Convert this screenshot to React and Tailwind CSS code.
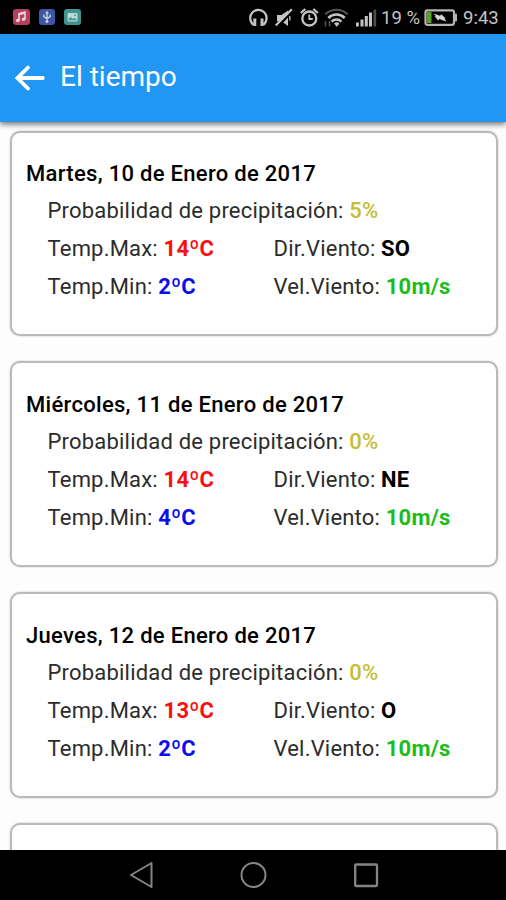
const days = [
  { date: 'Martes, 10 de Enero de 2017', rain: '5%', max: '14ºC', min: '2ºC', dir: 'SO', vel: '10m/s' },
  { date: 'Miércoles, 11 de Enero de 2017', rain: '0%', max: '14ºC', min: '4ºC', dir: 'NE', vel: '10m/s' },
  { date: 'Jueves, 12 de Enero de 2017', rain: '0%', max: '13ºC', min: '2ºC', dir: 'O', vel: '10m/s' },
];

function StatusBar() {
  return (
    <div className="flex h-[34px] shrink-0 items-center bg-black pl-[13px] text-[#c4c4c4]">
      <svg className="h-[34px] w-[17px]" viewBox="13 0 17 34">
        <rect x="13" y="9" width="17" height="16" rx="3" fill="#b5405c" />
        <path d="M19 20.5v-7l6-1.5v7M19 14.500l6-1.500" fill="none" stroke="#ecd5d9" strokeWidth="1.6" />
        <circle cx="17.8" cy="20.5" r="1.8" fill="#ecd5d9" />
        <circle cx="23.6" cy="19.3" r="1.8" fill="#ecd5d9" />
      </svg>
      <svg className="ml-[9px] h-[34px] w-[16px]" viewBox="39 0 16 34">
        <rect x="39" y="9" width="16" height="16" rx="3" fill="#3d57a5" />
        <path d="M47 12v10M43.8 14.5v2.2l3.2 2 3.2-2v-2.2" fill="none" stroke="#c8cfdf" strokeWidth="1.4" />
        <circle cx="47" cy="21.6" r="1.5" fill="#c8cfdf" />
        <path d="M45 13.5l2-2.7 2 2.7z" fill="#c8cfdf" />
      </svg>
      <svg className="ml-[9px] h-[34px] w-[17px]" viewBox="64 0 17 34">
        <rect x="64" y="9" width="17" height="16" rx="3" fill="#3f9491" />
        <rect x="67.500" y="13" width="10" height="8.500" rx="0.8" fill="#bfd8d5" />
        <path d="M68 20.300l2.500-3.200 2.300 1.800 1.700-1.200 2.700 2.600z" fill="#3f9491" />
        <circle cx="75" cy="15.200" r="0.900" fill="#3f9491" />
      </svg>
      <svg className="ml-[168px] h-[34px] w-[19px]" viewBox="249 0 19 34" fill="none" stroke="currentColor">
        <path d="M253.500 25c-2-1.600-3.300-4-3.300-7a8.200 8.200 0 0 1 16.400 0c0 3-1.300 5.400-3.300 7" strokeWidth="2.200" />
        <path d="M254.800 18.500v7.500M262 18.500v7.500" strokeWidth="3" />
      </svg>
      <svg className="ml-[7px] h-[34px] w-[18px]" viewBox="275 0 18 34" fill="none" stroke="currentColor">
        <path d="M277 15h4.500l6.500-4.500v15.500l-6.500-4.800h-4.500z" fill="currentColor" stroke="none" />
        <path d="M277.500 27L293 10.500" stroke="#000" strokeWidth="2.500" />
        <path d="M275.700 25.500L291.800 9.300" strokeWidth="2.200" />
        <path d="M289.800 16v4.500" strokeWidth="1.300" />
      </svg>
      <svg className="ml-[7px] h-[34px] w-[19px]" viewBox="300 0 19 34" fill="none" stroke="currentColor">
        <circle cx="309.300" cy="18.500" r="7" strokeWidth="2.300" />
        <path d="M309.300 14.500v4.500h3.500" strokeWidth="1.800" />
        <path d="M300.800 13l4.500-4M317.800 13l-4.500-4" strokeWidth="2.300" />
      </svg>
      <svg className="ml-[5px] h-[34px] w-[25px]" viewBox="324 0 25 34" fill="none" stroke="currentColor">
        <path d="M325.300 14.200a16 16 0 0 1 22.400 0" stroke="#555" strokeWidth="2" />
        <path d="M328.300 18a11.600 11.600 0 0 1 16.400 0" strokeWidth="2.500" />
        <path d="M331.600 21.600a7 7 0 0 1 9.800 0" strokeWidth="2.500" />
        <path d="M334 23.500a4.300 4.300 0 0 1 5.500 0l-2.700 3.300z" fill="currentColor" stroke="none" />
        <path d="M325.500 21v5.500M329.500 21v5.500" stroke="#555" strokeWidth="1.500" />
      </svg>
      <svg className="ml-[7px] h-[34px] w-[21px]" viewBox="356 0 21 34" fill="currentColor">
        <rect x="356" y="22.500" width="2.800" height="4" />
        <rect x="360.500" y="19.500" width="3" height="7" />
        <rect x="364.800" y="16" width="3" height="10.500" />
        <rect x="369" y="12.500" width="3" height="14" />
        <rect x="373.500" y="9.500" width="2.700" height="17" fill="#4c4c4c" />
      </svg>
      <span className="ml-[4px] w-[43px] whitespace-nowrap pt-[2px] text-[18.500px] leading-[34px]">19 %</span>
      <svg className="h-[34px] w-[33px]" viewBox="424 0 33 34">
        <rect x="425.500" y="10.300" width="28.500" height="14.500" rx="2" fill="none" stroke="#b4b4b4" strokeWidth="2.200" />
        <rect x="454.800" y="13.500" width="2.200" height="8" rx="1" fill="#b4b4b4" />
        <rect x="427" y="12" width="4.500" height="11" fill="#57a51c" />
        <path d="M433.500 13.500l6.500 2.300 1.300-1.600 4.400 4.300-1.200.300 2 3-7-2.700-1.300 1.400-3.700-4.300h1.500z" fill="#d4d4d4" />
      </svg>
      <span className="ml-[6px] whitespace-nowrap pt-[2px] text-[18.500px] leading-[34px]">9:43</span>
    </div>
  );
}

function DayCard({ day }) {
  return (
    <section className="h-[205.500px] shrink-0 rounded-[10px] border-2 border-[#bababa] bg-white pl-[14px] pt-[22.400px] shadow-[0_0_2px_rgba(0,0,0,0.25)]">
      <h2 className="h-[37px] whitespace-nowrap text-[22px] font-medium leading-[38px] tracking-[0.3px] text-black">{day.date}</h2>
      <div className="grid grid-cols-[226px_1fr] pl-[21.500px] text-[22px] leading-[38px] tracking-[0.2px]">
        <p className="col-span-2">Probabilidad de precipitación: <b className="font-medium text-[#c5bd36]">{day.rain}</b></p>
        <p>Temp.Max: <b className="font-bold text-[#f81010]">{day.max}</b></p>
        <p>Dir.Viento: <b className="font-bold text-black">{day.dir}</b></p>
        <p>Temp.Min: <b className="font-bold text-[#0c0cec]">{day.min}</b></p>
        <p>Vel.Viento: <b className="font-bold text-[#1abd1a]">{day.vel}</b></p>
      </div>
    </section>
  );
}

export default function App() {
  return (
    <div className="flex h-[900px] w-[506px] flex-col overflow-hidden bg-[#fdfdfd] font-['Roboto',sans-serif] text-[#2c2c2c]">
      <StatusBar />
      <header className="relative flex h-[88px] shrink-0 items-center bg-[#2196f3] pl-[15px] text-white shadow-[0_2px_6px_rgba(0,0,0,0.6)]">
        <svg className="h-[26px] w-[30px]" viewBox="0 0 30 26" fill="none" stroke="currentColor" strokeWidth="3.800" strokeLinecap="round">
          <path d="M27.800 13H3M13 2.500L2.500 13 13 23.500" />
        </svg>
        <h1 className="ml-[15px] pb-[2px] text-[28px] leading-none">El tiempo</h1>
      </header>
      <main className="flex min-h-0 flex-1 flex-col gap-[25.200px] overflow-hidden pl-[10px] pr-[8px] pt-[8.800px]">
        {days.map((day) => <DayCard key={day.date} day={day} />)}
        <section className="h-[205.500px] shrink-0 rounded-[10px] border-2 border-[#bababa] bg-white shadow-[0_0_2px_rgba(0,0,0,0.25)]" />
      </main>
      <nav className="flex h-[50px] shrink-0 items-center bg-black pl-[129px] text-[#858585]">
        <svg className="h-[50px] w-[25px]" viewBox="0 0 25 50" fill="none" stroke="currentColor" strokeWidth="2" strokeLinejoin="round">
          <path d="M2 25L22.500 13V37z" />
        </svg>
        <svg className="ml-[86px] h-[50px] w-[28px]" viewBox="0 0 28 50" fill="none" stroke="currentColor" strokeWidth="2">
          <circle cx="13.500" cy="25" r="12" />
        </svg>
        <svg className="ml-[85px] h-[50px] w-[26px]" viewBox="0 0 26 50" fill="none" stroke="currentColor" strokeWidth="2.300">
          <rect x="2.200" y="14.500" width="21.800" height="21.500" rx="1" />
        </svg>
      </nav>
    </div>
  );
}
